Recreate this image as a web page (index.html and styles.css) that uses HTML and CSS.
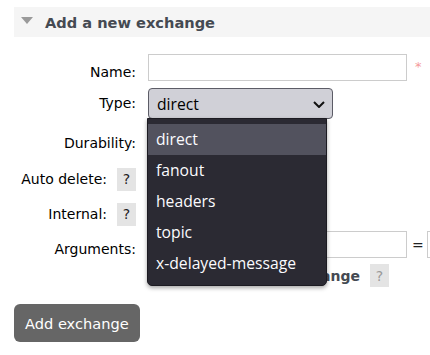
FILE: index.html
```html
<!DOCTYPE html>
<html>
<head>
<meta charset="utf-8">
<link rel="stylesheet" href="styles.css">
</head>
<body>
<div class="section">
  <div class="section-head">
    <span class="tri"></span>
    <h2>Add a new exchange</h2>
  </div>
  <div class="section-body">
    <div class="form">
      <div class="row r-name">
        <label class="lbl">Name:</label>
        <div class="ctl">
          <input class="text" type="text">
          <span class="req">*</span>
        </div>
      </div>
      <div class="row r-type">
        <label class="lbl">Type:</label>
        <div class="ctl">
          <div class="select-wrap">
            <div class="select">
              <span>direct</span>
              <svg class="chev" width="12" height="7" viewBox="0 0 12 7"><path d="M1 1 L6 6 L11 1" fill="none" stroke="#111" stroke-width="2"/></svg>
            </div>
            <ul class="dropdown">
              <li class="active">direct</li>
              <li>fanout</li>
              <li>headers</li>
              <li>topic</li>
              <li>x-delayed-message</li>
            </ul>
          </div>
        </div>
      </div>
      <div class="row r-dur">
        <label class="lbl">Durability:</label>
        <div class="ctl"><div class="small-select"></div></div>
      </div>
      <div class="row r-ad">
        <label class="lbl">Auto delete: <span class="help">?</span></label>
        <div class="ctl"><div class="small-select"></div></div>
      </div>
      <div class="row r-int">
        <label class="lbl">Internal: <span class="help">?</span></label>
        <div class="ctl"><div class="small-select"></div></div>
      </div>
      <div class="row r-args">
        <label class="lbl">Arguments:</label>
        <div class="ctl">
          <div class="multifield">
            <input class="text key" type="text">
            <span class="eq">=</span>
            <input class="text val" type="text">
          </div>
          <div class="arg-links">
            <span class="add">Add</span>
            <span class="arg-link">Alternate exchange</span>
            <span class="help muted">?</span>
          </div>
        </div>
      </div>
    </div>
    <button class="btn" type="button">Add exchange</button>
  </div>
</div>
</body>
</html>
```

FILE: styles.css
```css
html, body {
  margin: 0;
  padding: 0;
  overflow: hidden;
  background: #fff;
}

body {
  width: 430px;
  height: 355px;
  font-family: "DejaVu Sans", Verdana, sans-serif;
  font-size: 14px;
  color: #000;
}

.section {
  padding-top: 7px;
  margin-left: 14px;
}

.section-head {
  height: 30px;
  background: #f5f5f5;
  display: flex;
  align-items: center;
  padding-left: 7px;
  gap: 12px;
}

.tri {
  width: 0;
  height: 0;
  border-left: 6.5px solid transparent;
  border-right: 6.5px solid transparent;
  border-top: 7px solid #9a9a9a;
  margin-top: -3px;
}

.section-head h2 {
  margin: 0;
  font-size: 14.6px;
  font-weight: bold;
  color: #454a52;
}

.section-body {
  padding-top: 17px;
}

.row {
  display: grid;
  grid-template-columns: 122px 1fr;
  column-gap: 12px;
  align-items: start;
}

.r-name { height: 31px; }
.r-type { height: 40px; }
.r-dur { height: 36px; }
.r-ad { height: 35px; }
.r-int { height: 35px; }

.lbl {
  display: flex;
  justify-content: flex-end;
  align-items: center;
  gap: 10px;
  height: 17px;
  line-height: 17px;
  margin-top: 10px;
  white-space: nowrap;
}

.help {
  flex: none;
  width: 19px;
  height: 23px;
  background: #e4e4e4;
  color: #222;
  display: flex;
  align-items: center;
  justify-content: center;
  font-size: 14px;
}

.help.muted {
  color: #999;
}

.ctl {
  display: flex;
  flex-direction: column;
  align-items: flex-start;
}

.r-name .ctl {
  flex-direction: row;
  align-items: center;
}

.text {
  box-sizing: border-box;
  height: 27px;
  border: 1px solid #cccccc;
  background: #fff;
  margin: 0;
  padding: 0 4px;
  font: inherit;
}

.r-name .text {
  width: 259px;
}

.req {
  color: #f59a9a;
  font-size: 13px;
  margin-left: 8px;
  margin-top: -3px;
}

.select-wrap {
  position: relative;
  margin-top: 3px;
}

.select {
  box-sizing: border-box;
  width: 185px;
  height: 31px;
  border: 1px solid #5c5c66;
  border-radius: 4px;
  background: #d0d0d7;
  display: flex;
  align-items: center;
  justify-content: space-between;
  padding: 0 7px 0 8px;
  font-family: "Open Sans", "Noto Sans", sans-serif;
  font-size: 15.7px;
  color: #000;
}

.chev {
  margin-top: 1px;
}

.dropdown {
  position: absolute;
  left: -1px;
  top: 30px;
  width: 180px;
  box-sizing: border-box;
  margin: 0;
  padding: 5px 0 6px;
  list-style: none;
  background: #2b2a33;
  border: 1px solid #1c1b22;
  border-radius: 0 0 5px 5px;
  box-shadow: 0 2px 4px rgba(0, 0, 0, 0.35);
  font-family: "Open Sans", "Noto Sans", sans-serif;
  font-size: 15.7px;
  color: #fbfbfe;
  z-index: 5;
}

.dropdown li {
  height: 31px;
  line-height: 31px;
  padding-left: 8px;
}

.dropdown li.active {
  background: #52525e;
}

.small-select {
  box-sizing: border-box;
  width: 120px;
  height: 27px;
  margin-top: 3px;
  border: 1px solid #ccc;
}

.multifield {
  display: flex;
  align-items: center;
  white-space: nowrap;
}

.key {
  width: 259px;
}

.eq {
  margin: 0 3px 0 5px;
  color: #222;
}

.val {
  width: 120px;
}

.arg-links {
  display: flex;
  align-items: center;
  height: 27px;
  margin-top: 4px;
  color: #444;
}

.add {
  margin-right: 30px;
}

.arg-link {
  font-weight: bold;
  color: #454a52;
  margin-right: 10px;
}

.btn {
  display: block;
  margin-top: 15px;
  height: 38px;
  padding: 0 11px;
  border: 0;
  border-radius: 6px;
  background: #666;
  color: #fff;
  font-family: "DejaVu Sans", Verdana, sans-serif;
  font-size: 14.6px;
}
```
